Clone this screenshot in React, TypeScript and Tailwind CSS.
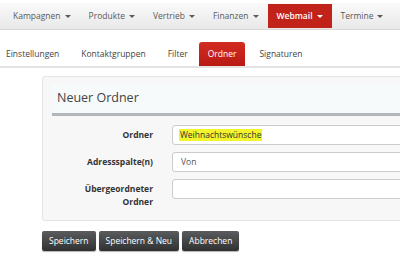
const navItems = ["Kampagnen", "Produkte", "Vertrieb", "Finanzen", "Webmail", "Termine"];
const tabs = ["Einstellungen", "Kontaktgruppen", "Filter", "Ordner", "Signaturen"];

function Caret() {
  return <span className="ml-[4px] inline-block border-x-[3px] border-t-[3px] border-x-transparent border-t-current align-middle" />;
}

export default function App() {
  return (
    <div className="h-[260px] w-[400px] overflow-hidden bg-white font-['Open_Sans',sans-serif] text-[#333]">
      <div className="w-[480px]">
        {/* Top navigation */}
        <div className="mt-[3px] flex h-[27px] items-stretch border-b border-[#d8d8d8] bg-gradient-to-b from-[#fafafa] to-[#e8e8e8] pl-[4px] text-[8.5px] text-[#5a5a5a]">
          {navItems.map((item) => (
            <div
              key={item}
              className={`flex items-center px-[9px] ${
                item === "Webmail"
                  ? "my-[1px] bg-[#c1231b] font-semibold text-white"
                  : ""
              }`}
            >
              {item}
              <Caret />
            </div>
          ))}
        </div>

        {/* Tabs */}
        <div className="mt-[12px] flex h-[26px] items-stretch border-b-2 border-[#e3e3e3] text-[8.5px] text-[#444]">
          <div className="-ml-[5px] flex items-stretch">
            {tabs.map((tab) => (
              <div
                key={tab}
                className={`flex items-center ${
                  tab === "Ordner"
                    ? "mr-[3px] rounded-t-[3px] bg-gradient-to-b from-[#d42b22] to-[#b81a14] px-[9px] text-white"
                    : "px-[11px]"
                }`}
              >
                {tab}
              </div>
            ))}
          </div>
        </div>

        {/* Panel */}
        <div className="ml-[42px] mt-[8px] h-[145px] rounded-[3px] border border-[#e4e4e4] bg-[#f7f7f7] px-[9px] pt-[6px]">
          <div className="flex h-[33px] items-center border-b-[3px] border-[#b3b6ba] bg-[#f6fafa] pl-[5px] text-[12.5px] text-[#444]">
            Neuer Ordner
          </div>
          <div className="mt-[9px] flex flex-col gap-[7px] text-[8.5px] font-bold text-[#333]">
            <div className="flex items-center">
              <div className="w-[101px] text-right">Ordner</div>
              <div className="ml-[19px] flex h-[20px] flex-1 items-center rounded-[3px] border border-[#ccc] bg-white pl-[6px] font-normal">
                <span className="bg-[#f4f42a] px-[1px] leading-[12px]">Weihnachtswünsche</span>
              </div>
            </div>
            <div className="flex items-center">
              <div className="w-[101px] text-right">Adressspalte(n)</div>
              <div className="ml-[19px] flex h-[20px] flex-1 items-center rounded-[3px] border border-[#ccc] bg-white pl-[8px] font-normal text-[#555]">
                Von
              </div>
            </div>
            <div className="flex items-start">
              <div className="w-[101px] pt-[3px] text-right leading-[13px]">
                Übergeordneter
                <br />
                Ordner
              </div>
              <div className="ml-[19px] h-[20px] flex-1 rounded-[3px] border border-[#ccc] bg-white" />
            </div>
          </div>
        </div>

        {/* Buttons */}
        <div className="ml-[42px] mt-[10px] flex gap-[3px] text-[8.5px] text-white">
          {["Speichern", "Speichern & Neu", "Abbrechen"].map((b) => (
            <button
              key={b}
              className="h-[20px] rounded-[2px] bg-gradient-to-b from-[#5a5c5e] to-[#2f3133] px-[7px] shadow-[0_1px_1px_rgba(0,0,0,0.3)]"
            >
              {b}
            </button>
          ))}
        </div>
      </div>
    </div>
  );
}
